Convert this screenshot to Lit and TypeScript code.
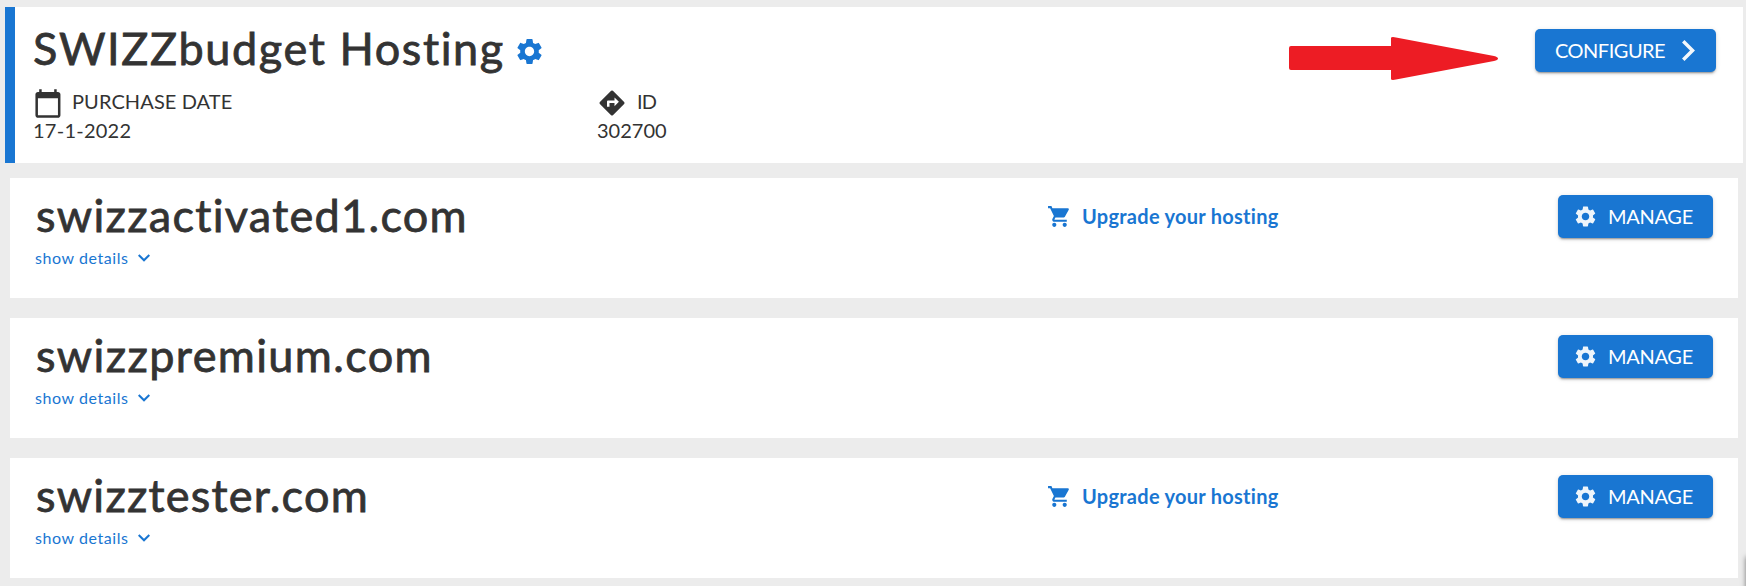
import { LitElement, html, css, svg, nothing } from "lit";
import { customElement, property } from "lit/decorators.js";

const GEAR = svg`<path d="M19.14 12.94c.04-.3.06-.61.06-.94 0-.32-.02-.64-.07-.94l2.03-1.58a.49.49 0 0 0 .12-.61l-1.92-3.32a.488.488 0 0 0-.59-.22l-2.39.96c-.5-.38-1.03-.7-1.62-.94l-.36-2.54a.484.484 0 0 0-.48-.41h-3.84c-.24 0-.43.17-.47.41l-.36 2.54c-.59.24-1.13.57-1.62.94l-2.39-.96c-.22-.08-.47 0-.59.22L2.74 8.87c-.12.21-.08.47.12.61l2.03 1.58c-.05.3-.09.63-.09.94s.02.64.07.94l-2.03 1.58a.49.49 0 0 0-.12.61l1.92 3.32c.12.22.37.29.59.22l2.39-.96c.5.38 1.03.7 1.62.94l.36 2.54c.05.24.24.41.48.41h3.84c.24 0 .44-.17.47-.41l.36-2.54c.59-.24 1.13-.56 1.62-.94l2.39.96c.22.08.47 0 .59-.22l1.92-3.32c.12-.22.07-.47-.12-.61l-2.01-1.58zM12 15.6c-1.98 0-3.6-1.62-3.6-3.6s1.62-3.6 3.6-3.6 3.6 1.62 3.6 3.6-1.62 3.6-3.6 3.6z"/>`;

const shared = css`
  * { box-sizing: border-box; }
  svg { display: block; flex: none; fill: currentColor; }
  .title {
    font-size: 45px;
    line-height: 54px;
    white-space: nowrap;
    -webkit-text-stroke: 0.8px currentColor;
  }
  .btn {
    display: flex;
    align-items: center;
    height: 43px;
    border-radius: 5px;
    background: #1976d2;
    color: #fff;
    font-size: 20px;
    line-height: 28px;
    white-space: nowrap;
    box-shadow: 0 3px 1px -2px rgba(0,0,0,.2), 0 2px 2px rgba(0,0,0,.14), 0 1px 5px rgba(0,0,0,.12);
  }
  .btn span { padding-bottom: 2px; }
`;

@customElement("domain-card")
class DomainCard extends LitElement {
  @property() name = "";
  @property({ type: Boolean }) upgradable = false;
  @property({ type: Number }) tracking = 1.3;

  static styles = [shared, css`
    :host { display: block; }
    .card {
      display: grid;
      grid-template-columns: 1012px 1fr 155px;
      height: 120px;
      padding: 9px 25px 0;
      background: #fff;
    }
    .domain { padding: 1px 0 0 1px; }
    .details {
      display: flex;
      align-items: center;
      gap: 9px;
      margin-top: 6px;
      color: #1976d2;
      font-size: 16px;
      line-height: 20px;
      letter-spacing: 0.57px;
    }
    .upgrade {
      display: flex;
      align-items: center;
      gap: 10px;
      height: 28px;
      margin-top: 15px;
      color: #1976d2;
      font-size: 20px;
      font-weight: 700;
      line-height: 28px;
      letter-spacing: 0.27px;
    }
    .cart { margin-top: 1px; }
    .manage {
      margin-top: 8px;
      padding-left: 15px;
      gap: 10px;
      letter-spacing: -0.3px;
    }
    .manage svg { opacity: 0.93; }
  `];

  render() {
    return html`
      <section class="card">
        <div>
          <div class="title domain" style="letter-spacing:${this.tracking}px">${this.name}</div>
          <div class="details">
            <span>show details</span>
            <svg width="12" height="8" viewBox="6 8.3 12 8"><path d="M7.41 8.59 12 13.17l4.59-4.58L18 10l-6 6-6-6z"/></svg>
          </div>
        </div>
        ${this.upgradable ? html`
          <div class="upgrade">
            <svg class="cart" width="25" height="25" viewBox="0 0 24 24"><path d="M7 18c-1.1 0-1.99.9-1.99 2S5.9 22 7 22s2-.9 2-2-.9-2-2-2zM1 2v2h2l3.6 7.59-1.35 2.45c-.16.28-.25.61-.25.96 0 1.1.9 2 2 2h12v-2H7.42c-.14 0-.25-.11-.25-.25l.03-.12.9-1.63h7.45c.75 0 1.41-.41 1.75-1.03l3.58-6.49A1.003 1.003 0 0 0 20 4H5.21l-.94-2H1zm16 16c-1.1 0-1.99.9-1.99 2s.89 2 1.99 2 2-.9 2-2-.9-2-2-2z"/></svg>
            <span>Upgrade your hosting</span>
          </div>` : html`<div>${nothing}</div>`}
        <div>
          <div class="btn manage">
            <svg width="25" height="25" viewBox="0 0 24 24">${GEAR}</svg>
            <span>MANAGE</span>
          </div>
        </div>
      </section>`;
  }
}

@customElement("app-root")
class AppRoot extends LitElement {
  static styles = [shared, css`
    :host {
      display: block;
      position: relative;
      height: 586px;
      overflow: hidden;
      background: #ececec;
      color: #333;
      font-family: Lato, "Noto Sans", sans-serif;
    }
    .page { padding: 7px 3px 0 5px; }
    .product {
      display: flex;
      justify-content: space-between;
      height: 156px;
      padding: 14px 27px 0 18px;
      border-left: 10px solid #1976d2;
      background: #fff;
    }
    .head { display: flex; align-items: flex-start; height: 54px; }
    .name { width: 481px; letter-spacing: 1.6px; }
    .gear { margin-top: 15px; color: #1976d2; }
    .facts {
      display: grid;
      grid-template-columns: 564px auto;
      margin-top: 12px;
      font-size: 20px;
      line-height: 28px;
    }
    .label { display: flex; height: 29px; }
    .calendar { margin: 1px 8px -4px -2px; }
    .route { margin: 1px 10px -3px 0; }
    .caps { letter-spacing: 0.1px; }
    .tight { letter-spacing: -0.8px; }
    .date { letter-spacing: 0.25px; }
    .configure {
      justify-content: space-between;
      width: 181px;
      margin-top: 8px;
      padding: 0 21px 0 20px;
      letter-spacing: -0.5px;
    }
    .configure svg { opacity: 0.95; }
    .list {
      display: grid;
      gap: 20px;
      padding: 15px 5px 0;
    }
    .arrow { position: absolute; left: 1289px; top: 37px; color: #ed1c24; }
    .float {
      position: absolute;
      left: 1746px;
      top: 556px;
      width: 40px;
      height: 60px;
      box-shadow: 0 1px 5px rgba(0,0,0,.5);
    }
  `];

  render() {
    return html`
      <main class="page">
        <section class="product">
          <div>
            <div class="head">
              <div class="title name">SWIZZbudget Hosting</div>
              <svg class="gear" width="31" height="31" viewBox="0 0 24 24">${GEAR}</svg>
            </div>
            <div class="facts">
              <div>
                <div class="label">
                  <svg class="calendar" width="33" height="31" viewBox="0 0 24 24" preserveAspectRatio="none"><path d="M20 3h-1V1h-2v2H7V1H5v2H4c-1.1 0-2 .9-2 2v16c0 1.1.9 2 2 2h16c1.1 0 2-.9 2-2V5c0-1.1-.9-2-2-2zm0 18H4V8h16v13z" transform="translate(1.4 0) scale(.91 1)"/></svg>
                  <span class="caps">PURCHASE DATE</span>
                </div>
                <div class="date">17-1-2022</div>
              </div>
              <div>
                <div class="label">
                  <svg class="route" width="30" height="30" viewBox="0 0 24 24"><path d="m21.71 11.29-9-9a.996.996 0 0 0-1.41 0l-9 9a.996.996 0 0 0 0 1.41l9 9c.39.39 1.02.39 1.41 0l9-9a.996.996 0 0 0 0-1.41zM14 14.5V12h-4v3H8v-4c0-.55.45-1 1-1h5V7.5l3.5 3.5-3.5 3.5z"/></svg>
                  <span class="tight">ID</span>
                </div>
                <div>302700</div>
              </div>
            </div>
          </div>
          <div>
            <div class="btn configure">
              <span>CONFIGURE</span>
              <svg width="13" height="21" viewBox="8.59 6 7.41 12"><path d="M10 6 8.59 7.41 13.17 12l-4.58 4.59L10 18l6-6z"/></svg>
            </div>
          </div>
        </section>
        <div class="list">
          <domain-card name="swizzactivated1.com" tracking="1.3" upgradable></domain-card>
          <domain-card name="swizzpremium.com" tracking="1.38"></domain-card>
          <domain-card name="swizztester.com" tracking="1.25" upgradable></domain-card>
        </div>
      </main>
      <svg class="arrow" width="209" height="43" viewBox="0 0 209 43"><path d="M2 9H102V1Q102 0 104 0L107 .5 205 19Q209 20 209 21.5T205 24L107 42.5 104 43Q102 43 102 42V33H2Q0 33 0 31V11Q0 9 2 9z"/></svg>
      <div class="float"></div>`;
  }
}
